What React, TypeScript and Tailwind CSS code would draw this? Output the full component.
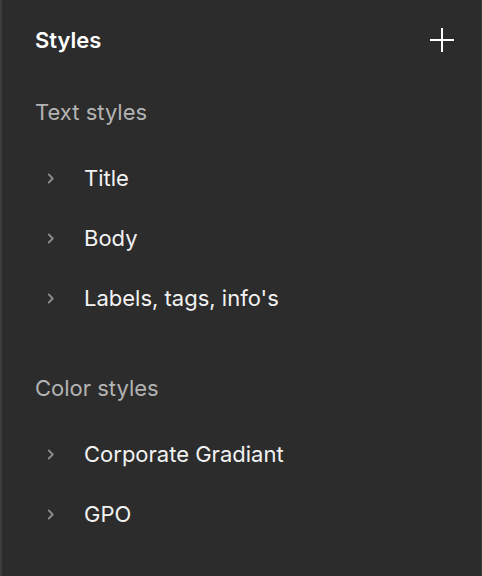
const textStyles = ["Title", "Body", "Labels, tags, info's"];
const colorStyles = ["Corporate Gradiant", "GPO"];

function Chevron() {
  return (
    <svg width="8" height="11" viewBox="0 0 8 11" className="shrink-0">
      <path d="M1.8 1.5 L5.8 5.5 L1.8 9.5" fill="none" stroke="#8c8c8c" strokeWidth="1.8" strokeLinecap="round" strokeLinejoin="round" />
    </svg>
  );
}

function PlusIcon() {
  return (
    <svg width="26" height="26" viewBox="0 0 26 26">
      <path d="M13 1 V25 M1 13 H25" stroke="#ffffff" strokeWidth="2" />
    </svg>
  );
}

function StyleRow({ label }: { label: string }) {
  return (
    <div className="flex h-[60px] items-center pl-[12px]">
      <Chevron />
      <span className="ml-[29px] text-[22px] text-[#f2f2f2]">{label}</span>
    </div>
  );
}

export default function App() {
  return (
    <div
      className="h-[576px] w-[482px] border-l-2 border-r border-[#3d3d3d] bg-[#2c2c2c]"
      style={{ fontFamily: "Inter, 'Noto Sans', sans-serif" }}
    >
      {/* Header */}
      <div className="flex h-20 items-center justify-between pl-[33px] pr-[26px]">
        <h1 className="text-[22px] font-semibold text-white">Styles</h1>
        <PlusIcon />
      </div>

      {/* Text styles */}
      <div className="mt-3 flex h-10 items-center pl-[33px] text-[22px] text-[#b3b3b3]">
        Text styles
      </div>
      <div className="mt-4 pl-[33px]">
        {textStyles.map((s) => (
          <StyleRow key={s} label={s} />
        ))}
      </div>

      {/* Color styles */}
      <div className="mt-10 flex h-10 items-center pl-[33px] text-[22px] text-[#b3b3b3]">
        Color styles
      </div>
      <div className="mt-4 pl-[33px]">
        {colorStyles.map((s) => (
          <StyleRow key={s} label={s} />
        ))}
      </div>
    </div>
  );
}
